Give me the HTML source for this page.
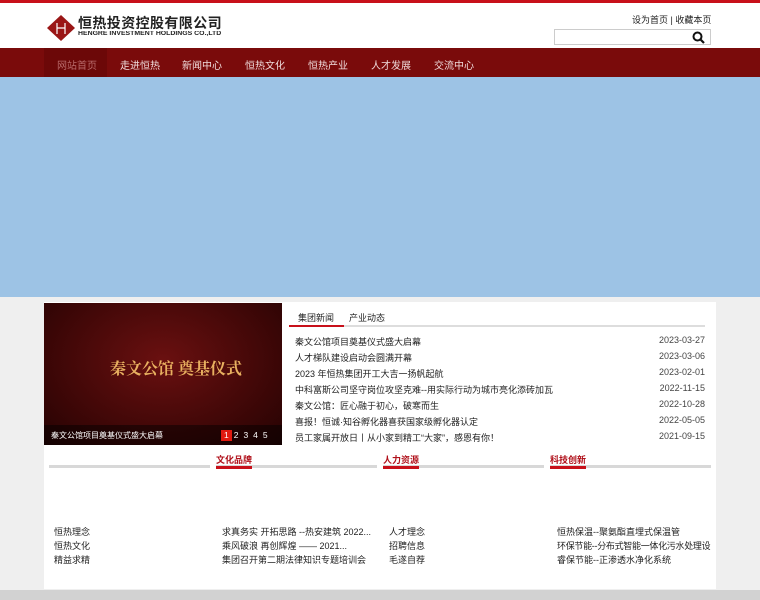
<!DOCTYPE html>
<html><head><meta charset="utf-8"><style>
*{margin:0;padding:0;box-sizing:border-box}
body{width:760px;height:600px;overflow:hidden;background:#efefef;font-family:"Liberation Sans","Noto Sans CJK SC",sans-serif;font-size:9px;color:#222;position:relative}
.a{position:absolute}
.top{left:0;top:0;width:760px;height:48px;background:#fff;border-top:3px solid #c8101a}
.nav{left:0;top:48px;width:760px;height:29px;background:#7a0b0b}
.nav span{position:absolute;top:9px;color:#f0dcdc;font-size:10px}
.banner{left:0;top:77px;width:760px;height:220px;background:#9dc3e5}
.box{left:44px;top:302px;width:672px;height:287px;background:#fff}
.img{left:44px;top:303px;width:238px;height:142px;background:radial-gradient(ellipse at 50% 40%,#6a1010,#3a0606 70%,#250303)}
.row{position:absolute;left:295px;width:410px;font-size:9px;color:#222}
.row b{font-weight:normal}
.row i{font-style:normal;position:absolute;right:0;color:#444}
.sec{position:absolute;top:465px;height:3px;background:#d8d8d8}
.secr{position:absolute;top:466px;height:3px;width:36px;background:#c8101a}
.st{position:absolute;top:453px;color:#b0101a;font-weight:bold;font-size:9px}
.l{position:absolute;font-size:9px;color:#222;white-space:nowrap}
</style></head><body>
<div class="a top"></div>
<svg class="a" style="left:47px;top:15px" width="28" height="26" viewBox="0 0 28 26"><polygon points="14,0 28,13 14,26 0,13" fill="#9a1616"/><path d="M10 8v11M18 8v11M10 13h8" stroke="#fff" stroke-width="1.2" fill="none"/></svg>
<div class="a" style="left:78px;top:15px;font-size:14px;line-height:16px;font-weight:bold;color:#222;letter-spacing:0.4px;white-space:nowrap">恒热投资控股有限公司</div>
<div class="a" style="left:78px;top:31px;font-size:6px;line-height:7px;font-weight:bold;color:#222;white-space:nowrap;transform:scaleX(1.15);transform-origin:left">HENGRE INVESTMENT HOLDINGS CO.,LTD</div>
<div class="a" style="left:632px;top:13px;font-size:9px;color:#222">设为首页 | 收藏本页</div>
<div class="a" style="left:554px;top:29px;width:157px;height:16px;border:1px solid #ccc;background:#fff"></div>
<svg class="a" style="left:692px;top:31px" width="13" height="13" viewBox="0 0 13 13"><circle cx="5.5" cy="5.5" r="4" stroke="#111" stroke-width="2" fill="none"/><path d="M8.5 8.5l3.5 3.5" stroke="#111" stroke-width="2.2"/></svg>
<div class="a nav"><div class="a" style="left:44px;top:0;width:63px;height:29px;background:#6c0808"></div>
<span style="left:57px;color:#b86a6a">网站首页</span><span style="left:120px">走进恒热</span><span style="left:182px">新闻中心</span><span style="left:245px">恒热文化</span><span style="left:308px">恒热产业</span><span style="left:371px">人才发展</span><span style="left:434px">交流中心</span></div>
<div class="a banner"></div>
<div class="a box"></div>
<div class="a img"></div>
<div class="a" style="left:110px;top:356px;color:#e8b060;font-size:16px;font-weight:bold;font-family:'Noto Serif CJK SC',serif">秦文公馆 奠基仪式</div>
<div class="a" style="left:44px;top:425px;width:238px;height:20px;background:rgba(0,0,0,.45)"></div>
<div class="a" style="left:51px;top:430px;color:#fff;font-size:8px">秦文公馆项目奠基仪式盛大启幕</div>
<div class="a" style="left:221px;top:430px;width:11px;height:11px;background:#e01a10"></div>
<div class="a" style="left:224px;top:430px;color:#fff;font-size:8.5px;letter-spacing:5px">12345</div>
<div class="a" style="left:289px;top:325px;width:416px;height:2px;background:#ddd"></div>
<div class="a" style="left:289px;top:325px;width:55px;height:2px;background:#c8101a"></div>
<div class="a" style="left:298px;top:311px;font-size:9px">集团新闻</div>
<div class="a" style="left:349px;top:311px;font-size:9px">产业动态</div>
<div class="row" style="top:335px"><b>秦文公馆项目奠基仪式盛大启幕</b><i>2023-03-27</i></div>
<div class="row" style="top:351px"><b>人才梯队建设启动会圆满开幕</b><i>2023-03-06</i></div>
<div class="row" style="top:367px"><b>2023 年恒热集团开工大吉一扬帆起航</b><i>2023-02-01</i></div>
<div class="row" style="top:383px"><b>中科富斯公司坚守岗位攻坚克难--用实际行动为城市亮化添砖加瓦</b><i>2022-11-15</i></div>
<div class="row" style="top:399px"><b>秦文公馆：匠心融于初心，破寒而生</b><i>2022-10-28</i></div>
<div class="row" style="top:415px"><b>喜报！恒诚·知谷孵化器喜获国家级孵化器认定</b><i>2022-05-05</i></div>
<div class="row" style="top:431px"><b>员工家属开放日丨从小家到精工“大家”，感恩有你！</b><i>2021-09-15</i></div>
<div class="sec" style="left:49px;width:161px"></div>
<div class="sec" style="left:216px;width:161px"></div>
<div class="sec" style="left:383px;width:161px"></div>
<div class="sec" style="left:550px;width:161px"></div>
<div class="secr" style="left:216px"></div><div class="secr" style="left:383px"></div><div class="secr" style="left:550px"></div>
<div class="st" style="left:216px">文化品牌</div><div class="st" style="left:383px">人力资源</div><div class="st" style="left:550px">科技创新</div>
<div class="l" style="left:54px;top:525px">恒热理念</div><div class="l" style="left:54px;top:539px">恒热文化</div><div class="l" style="left:54px;top:553px">精益求精</div>
<div class="l" style="left:222px;top:525px">求真务实 开拓思路 --热安建筑 2022...</div><div class="l" style="left:222px;top:539px">乘风破浪 再创辉煌 —— 2021...</div><div class="l" style="left:222px;top:553px">集团召开第二期法律知识专题培训会</div>
<div class="l" style="left:389px;top:525px">人才理念</div><div class="l" style="left:389px;top:539px">招聘信息</div><div class="l" style="left:389px;top:553px">毛遂自荐</div>
<div class="l" style="left:557px;top:525px">恒热保温--聚氨酯直埋式保温管</div><div class="l" style="left:557px;top:539px;letter-spacing:-0.3px">环保节能--分布式智能一体化污水处理设</div><div class="l" style="left:557px;top:553px">睿保节能--正渗透水净化系统</div>
<div class="a" style="left:0;top:590px;width:760px;height:10px;background:#d2d2d2"></div>
</body></html>
